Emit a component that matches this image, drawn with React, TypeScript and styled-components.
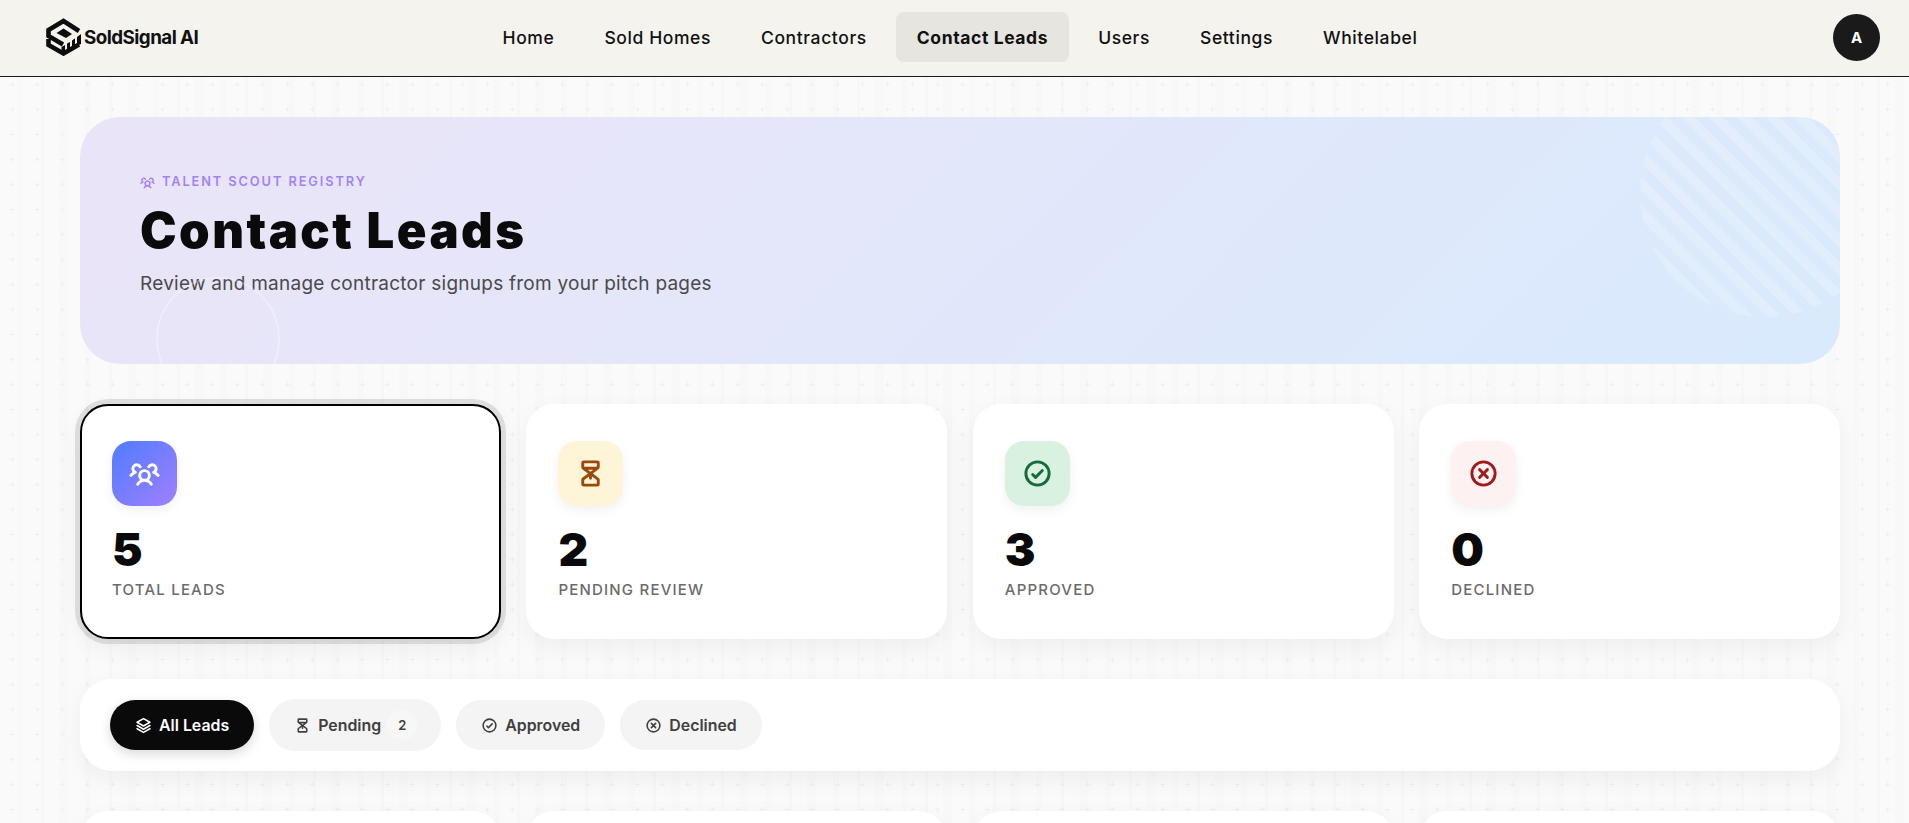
import styled, { createGlobalStyle } from 'styled-components'
import { PiUsersThreeBold, PiHourglassMediumBold, PiCheckCircleBold, PiXCircleBold, PiStackBold } from 'react-icons/pi'
import type { ReactNode } from 'react'

const navItems = ['Home', 'Sold Homes', 'Contractors', 'Contact Leads', 'Users', 'Settings', 'Whitelabel']

const stats = [
  { value: '5', label: 'Total Leads', tone: 'blue', icon: <PiUsersThreeBold />, selected: true },
  { value: '2', label: 'Pending Review', tone: 'amber', icon: <PiHourglassMediumBold /> },
  { value: '3', label: 'Approved', tone: 'green', icon: <PiCheckCircleBold /> },
  { value: '0', label: 'Declined', tone: 'red', icon: <PiXCircleBold /> },
]

const toneStyles: Record<string, string> = {
  blue: 'background: linear-gradient(135deg, #4f7cff, #a17fff); color: #fff;',
  amber: 'background: #fef5d9; color: #9a4a0e;',
  green: 'background: #d8f1e1; color: #166a3c;',
  red: 'background: #fef1f1; color: #a11a1a;',
}

const GlobalStyle = createGlobalStyle`
  html, body {
    margin: 0;
    overflow: hidden;
    background: #fafafa;
  }

  #root {
    width: 1920px;
  }
`

function Logo() {
  return (
    <LogoMark viewBox="0 0 36 38" aria-hidden="true">
      <g fill="none" stroke="#0d0d0d" strokeWidth="4.6" strokeLinejoin="miter">
        <path d="M33 13 L17.5 3 L2.5 12 V18 L17 26.5" />
        <path d="M2.5 21 V27 L17.5 35.5 L33 26.5" />
      </g>
      <path d="M10.5 15 L17.5 10.5 L26 16 L20 20 Z" fill="#0d0d0d" />
      <path d="M15.5 29 L19 27 V34 L15.5 33 Z M21 25.5 L24 24 V31.5 L21 33 Z M26 22.5 L29 20.5 V29 L26 30.5 Z M31 19 L35 16 V26 L31 28 Z" fill="#0d0d0d" />
    </LogoMark>
  )
}

function FilterPill({ active, icon, count, children }: { active?: boolean; icon: ReactNode; count?: number; children: ReactNode }) {
  return (
    <Pill $active={active}>
      <PillIcon>{icon}</PillIcon>
      {children}
      {count !== undefined && <PillCount>{count}</PillCount>}
    </Pill>
  )
}

export default function App() {
  return (
    <Page>
      <GlobalStyle />
      <Header>
        <Brand>
          <Logo />
          <BrandName>SoldSignal AI</BrandName>
        </Brand>
        <Nav>
          {navItems.map((item) => (
            <NavItem key={item} $active={item === 'Contact Leads'}>{item}</NavItem>
          ))}
        </Nav>
        <Avatar>A</Avatar>
      </Header>

      <Main>
        <Hero>
          <Eyebrow>
            <PiUsersThreeBold />
            Talent Scout Registry
          </Eyebrow>
          <Title>Contact Leads</Title>
          <Subtitle>Review and manage contractor signups from your pitch pages</Subtitle>
        </Hero>

        <StatGrid>
          {stats.map((stat) => (
            <StatCard key={stat.label} $selected={stat.selected}>
              <StatIcon $tone={stat.tone}>{stat.icon}</StatIcon>
              <StatValue>{stat.value}</StatValue>
              <StatLabel>{stat.label}</StatLabel>
            </StatCard>
          ))}
        </StatGrid>

        <FilterBar>
          <FilterPill active icon={<PiStackBold />}>All Leads</FilterPill>
          <FilterPill icon={<PiHourglassMediumBold />} count={2}>Pending</FilterPill>
          <FilterPill icon={<PiCheckCircleBold />}>Approved</FilterPill>
          <FilterPill icon={<PiXCircleBold />}>Declined</FilterPill>
        </FilterBar>

        <LeadGrid>
          <LeadCard />
          <LeadCard />
          <LeadCard />
          <LeadCard />
        </LeadGrid>
      </Main>
    </Page>
  )
}

const Page = styled.div`
  width: 1920px;
  min-height: 823px;
  font-family: Inter, 'Liberation Sans', sans-serif;
  color: #0a0a0a;
  background-color: #fafafa;
  background-image:
    radial-gradient(ellipse 2.2px 0.6px at 12.5px 9.5px, #efefef 90%, transparent 100%),
    radial-gradient(ellipse 0.6px 2.2px at 12.5px 9.5px, #efefef 90%, transparent 100%),
    repeating-linear-gradient(90deg, transparent 0 17px, rgba(0, 0, 0, 0.009) 17px 23px, transparent 23px 41px, rgba(0, 0, 0, 0.012) 41px 44px, transparent 44px 59px, rgba(0, 0, 0, 0.007) 59px 68px);
  background-size: 25px 25px, 25px 25px, auto;
`

const Header = styled.header`
  display: grid;
  grid-template-columns: 1fr auto 1fr;
  align-items: center;
  box-sizing: border-box;
  height: 77px;
  padding: 0 40px 2px;
  background: #f4f3ee;
  border-bottom: 1px solid #1a1a1a;
`

const Brand = styled.div`
  display: flex;
  align-items: center;
  gap: 2px;
  margin-left: 6px;
`

const LogoMark = styled.svg`
  width: 36px;
  height: 38px;
`

const BrandName = styled.span`
  font-size: 18.8px;
  font-weight: 700;
  letter-spacing: -0.55px;
  color: #111;
`

const Nav = styled.nav`
  display: flex;
  align-items: center;
  gap: 8px;
`

const NavItem = styled.a<{ $active?: boolean }>`
  display: flex;
  align-items: center;
  height: 50px;
  padding: 0 21px;
  border-radius: 8px;
  font-size: 17.5px;
  letter-spacing: 0.6px;
  font-weight: ${({ $active }) => ($active ? 700 : 500)};
  color: #111;
  background: ${({ $active }) => ($active ? '#e6e5df' : 'transparent')};
`

const Avatar = styled.div`
  justify-self: end;
  display: flex;
  align-items: center;
  justify-content: center;
  width: 47px;
  height: 47px;
  border-radius: 50%;
  background: #1a1a1a;
  color: #fff;
  font-size: 15px;
  font-weight: 700;
`

const Main = styled.main`
  display: flex;
  flex-direction: column;
  padding: 40px 80px 0;
`

const Hero = styled.section`
  position: relative;
  overflow: hidden;
  height: 247px;
  box-sizing: border-box;
  padding: 57px 60px 0;
  border-radius: 40px;
  background: linear-gradient(135deg, #ebe4f8 0%, #d9eafd 100%);

  &::before {
    content: '';
    position: absolute;
    top: -50px;
    right: -50px;
    width: 250px;
    height: 250px;
    border-radius: 50%;
    background: repeating-linear-gradient(45deg, transparent 0 10px, rgba(255, 255, 255, 0.2) 10px 20px);
  }

  &::after {
    content: '';
    position: absolute;
    left: 76px;
    bottom: -37px;
    width: 120px;
    height: 120px;
    border: 2px solid rgba(255, 255, 255, 0.3);
    border-radius: 50%;
  }
`

const Eyebrow = styled.div`
  display: flex;
  align-items: center;
  gap: 7px;
  font-size: 12.8px;
  line-height: 16px;
  font-weight: 600;
  letter-spacing: 1.9px;
  text-transform: uppercase;
  color: #a283f6;

  svg {
    font-size: 15px;
  }
`

const Title = styled.h1`
  margin: 11px 0 0;
  font-size: 49px;
  line-height: 60px;
  font-weight: 900;
  letter-spacing: 2.45px;
  color: #0a0a0a;
`

const Subtitle = styled.p`
  margin: 10px 0 0;
  font-size: 19px;
  line-height: 26px;
  letter-spacing: 0.25px;
  color: #4a4a4a;
`

const StatGrid = styled.section`
  display: grid;
  grid-template-columns: repeat(4, 1fr);
  gap: 25.6px;
  margin-top: 40px;
`

const StatCard = styled.article<{ $selected?: boolean }>`
  box-sizing: border-box;
  height: 235px;
  padding: ${({ $selected }) => ($selected ? '35px 30px' : '37px 32px')};
  border-radius: 28px;
  background: #fff;
  border: ${({ $selected }) => ($selected ? '2px solid #000' : 'none')};
  box-shadow: ${({ $selected }) =>
    $selected ? '0 0 0 5px rgba(0, 0, 0, 0.1), 0 8px 24px rgba(0, 0, 0, 0.06)' : '0 8px 24px rgba(0, 0, 0, 0.05)'};
`

const StatIcon = styled.div<{ $tone: string }>`
  display: flex;
  align-items: center;
  justify-content: center;
  width: 65px;
  height: 65px;
  border-radius: 19px;
  font-size: 31px;
  box-shadow: 0 4px 12px rgba(0, 0, 0, 0.06);
  ${({ $tone }) => toneStyles[$tone]}
`

const StatValue = styled.div`
  margin-top: 20px;
  font-size: 46px;
  line-height: 46px;
  font-weight: 900;
  color: #0a0a0a;
`

const StatLabel = styled.div`
  margin-top: 8px;
  font-size: 15px;
  line-height: 20px;
  font-weight: 500;
  letter-spacing: 1.2px;
  text-transform: uppercase;
  color: #6b6b6b;
`

const FilterBar = styled.section`
  display: flex;
  align-items: center;
  gap: 15px;
  box-sizing: border-box;
  height: 92px;
  margin-top: 40px;
  padding: 0 30px;
  border-radius: 32px;
  background: #fff;
  box-shadow: 0 8px 24px rgba(0, 0, 0, 0.05);
`

const Pill = styled.button<{ $active?: boolean }>`
  display: flex;
  align-items: center;
  gap: 7px;
  min-height: 50px;
  padding: 0 25px;
  border: none;
  border-radius: 26px;
  font-family: inherit;
  font-size: 15.9px;
  font-weight: 600;
  color: ${({ $active }) => ($active ? '#fff' : '#404040')};
  background: ${({ $active }) => ($active ? '#0a0a0a' : '#f4f4f4')};
  box-shadow: ${({ $active }) => ($active ? '0 4px 12px rgba(0, 0, 0, 0.15)' : 'none')};
`

const PillIcon = styled.span`
  display: flex;
  font-size: 17px;
`

const PillCount = styled.span`
  display: flex;
  align-items: center;
  justify-content: center;
  width: 30px;
  height: 30px;
  margin: 11px -1px 11px -1px;
  border-radius: 50%;
  font-size: 13px;
  background: #f7f7f7;
`

const LeadGrid = styled.section`
  display: grid;
  grid-template-columns: repeat(4, 1fr);
  gap: 25.6px;
  margin-top: 40px;
`

const LeadCard = styled.article`
  height: 320px;
  border-radius: 28px;
  background: #fff;
  box-shadow: 0 8px 24px rgba(0, 0, 0, 0.05);
`
